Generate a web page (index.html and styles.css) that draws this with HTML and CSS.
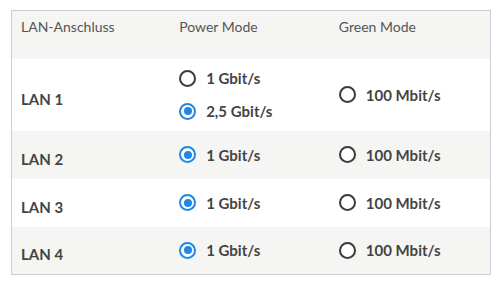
FILE: index.html
```html
<!DOCTYPE html>
<html lang="de">
<head>
  <meta charset="UTF-8" />
  <meta name="viewport" content="width=device-width, initial-scale=1.0" />
  <title>LAN-Einstellungen</title>
  <link rel="stylesheet" href="styles.css">
</head>
<body>
  <table class="lan-table" aria-label="LAN-Anschlüsse">
    <thead>
      <tr>
        <th>LAN-Anschluss</th>
        <th>Power Mode</th>
        <th>Green Mode</th>
      </tr>
    </thead>
    <tbody>
      <tr class="tall">
        <td class="port">LAN 1</td>
        <td>
          <label class="opt"><input type="radio" name="lan1"> 1 Gbit/s</label>
          <label class="opt"><input type="radio" name="lan1" checked> 2,5 Gbit/s</label>
        </td>
        <td><label class="opt"><input type="radio" name="lan1"> 100 Mbit/s</label></td>
      </tr>
      <tr class="alt">
        <td class="port">LAN 2</td>
        <td><label class="opt"><input type="radio" name="lan2" checked> 1 Gbit/s</label></td>
        <td><label class="opt"><input type="radio" name="lan2"> 100 Mbit/s</label></td>
      </tr>
      <tr>
        <td class="port">LAN 3</td>
        <td><label class="opt"><input type="radio" name="lan3" checked> 1 Gbit/s</label></td>
        <td><label class="opt"><input type="radio" name="lan3"> 100 Mbit/s</label></td>
      </tr>
      <tr class="alt">
        <td class="port">LAN 4</td>
        <td><label class="opt"><input type="radio" name="lan4" checked> 1 Gbit/s</label></td>
        <td><label class="opt"><input type="radio" name="lan4"> 100 Mbit/s</label></td>
      </tr>
    </tbody>
  </table>
</body>
</html>
```

FILE: styles.css
```css
body {
  margin: 0;
  padding: 10px 0 0 11px;
  font-family: Lato, "Open Sans", sans-serif;
  font-size: 14px;
  background: #fff;
  color: #444;
}
.lan-table {
  width: 480px;
  border-collapse: collapse;
  border: 1px solid #c4cfd7;
  table-layout: fixed;
}
th {
  background: #f5f5f3;
  color: #555;
  font-weight: normal;
  text-align: left;
  vertical-align: top;
  height: 48px;
  padding: 7px 8px 0;
  box-sizing: border-box;
}
th:first-child {
  padding-left: 9px;
}
td {
  height: 48px;
  padding: 0 8px;
  box-sizing: border-box;
  vertical-align: middle;
  font-size: 15px;
  font-weight: bold;
}
td.port {
  padding: 8px 9px 0;
}
tr.tall td {
  height: 72px;
}
tr.alt td {
  background: #f5f5f3;
}
.opt {
  display: flex;
  align-items: center;
  gap: 10px;
  height: 24px;
}
.tall .opt + .opt {
  margin-top: 9px;
}
.opt input {
  appearance: none;
  margin: 0;
  width: 17px;
  height: 17px;
  border: 2px solid #3a3a3a;
  border-radius: 50%;
  box-sizing: border-box;
  display: grid;
  place-items: center;
  background: #fff;
}
.opt input:checked {
  border-color: #2186e4;
}
.opt input:checked::after {
  content: "";
  width: 8px;
  height: 8px;
  border-radius: 50%;
  background: #2186e4;
}
```
